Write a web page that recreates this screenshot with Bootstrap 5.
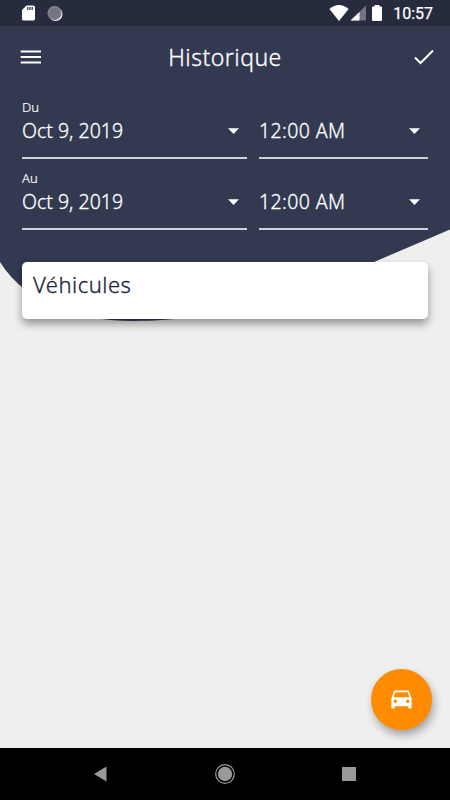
<!DOCTYPE html>
<html lang="fr">
<head>
<meta charset="utf-8">
<meta name="viewport" content="width=device-width, initial-scale=1">
<title>Historique</title>
<link href="https://cdn.jsdelivr.net/npm/bootstrap@5.3.0/dist/css/bootstrap.min.css" rel="stylesheet">
<style>
body{font-family:"Noto Sans",sans-serif;background:#efefef;height:800px;overflow:hidden}
svg{display:block;flex:none}
.backdrop{top:26px;left:0;z-index:0}
.status{height:26px;background:#262b3d;padding:0 17px 0 21px}
.clock{font:400 16px/26px Roboto,sans-serif;margin-left:8px;padding-top:2px;-webkit-text-stroke:.25px}
.appbar{height:62px;padding:0 16px 0 20px}
.title{font-size:23px;line-height:30px;padding-right:6px;margin-top:-1px!important;letter-spacing:.48px}
.fields{padding:12px 22px 0;display:grid;grid-template-columns:225px 169px;column-gap:12px}
.field{height:59px;margin-bottom:12.4px;border-bottom:2px solid #cfd1da}
.tag{font-size:13px;line-height:15px;height:15px;font-weight:300;-webkit-text-stroke:.2px}
.value{font-size:19.5px;line-height:32px;height:32px}
.date{letter-spacing:0}
.time{letter-spacing:.4px}
.panel{margin:19.2px 22px 0;height:57px;border-radius:5px;padding:7px 11px;font-size:22px;line-height:31px;letter-spacing:.5px;color:#20253a;box-shadow:0 5px 8px rgba(0,0,0,.38)}
.title,.value,.panel{font-weight:300;-webkit-text-stroke:.3px}
.fab{width:61px;height:61px;background:#ff8c00;margin:0 18px 18px;box-shadow:2px 5px 9px rgba(0,0,0,.33)}
.softkeys{height:52px;padding:0 94px}
</style>
<script src="https://cdn.jsdelivr.net/npm/bootstrap@5.3.0/dist/js/bootstrap.bundle.min.js"></script>
</head>
<body class="position-relative d-flex flex-column">
<svg class="backdrop position-absolute" width="450" height="300" viewBox="0 26 450 300"><path fill="#323950" d="M0 26H450V229.500L374 262L260 300C210 317 170 321 134 321C80 321 28 306 0 262Z"/></svg>

<div class="status position-relative d-flex align-items-center text-white">
  <svg width="15" height="18" viewBox="0 0 15 18"><path fill="#fff" d="M5.500 1.500H12.500Q14 1.500 14 3V15Q14 16.500 12.500 16.500H2.500Q1 16.500 1 15V6Z"/><path stroke="#262b3d" stroke-width="1.200" d="M6.800 3V6M9 3V6M11.200 3V6"/></svg>
  <svg class="ms-2" width="20" height="18" viewBox="0 0 20 18"><circle cx="11.500" cy="10" r="7" fill="#fff"/><circle cx="10.500" cy="9" r="7.200" fill="#727683"/><circle cx="10.500" cy="9" r="5.700" fill="none" stroke="#9599a4" stroke-dasharray="1 1"/></svg>
  <svg class="ms-auto" width="20" height="18" viewBox="0 0 20 18"><path fill="#fff" d="M.4 5Q10-3 19.600 5L10 17Z"/></svg>
  <svg width="18" height="18" viewBox="0 0 18 18"><path fill="#727683" d="M17 1.500V16.500H1.500Z"/><path fill="#fff" d="M10.500 8V16.500H1.500Z"/></svg>
  <svg width="18" height="18" viewBox="0 0 18 18"><path fill="#fff" d="M7.500 1H12.500V2.500H14Q15 2.500 15 3.500V16Q15 17 14 17H6Q5 17 5 16V3.500Q5 2.500 6 2.500H7.500Z"/></svg>
  <span class="clock">10:57</span>
</div>

<header class="appbar position-relative d-flex align-items-center justify-content-between text-white">
  <svg width="22" height="16" viewBox="0 0 22 16"><path stroke="#fff" stroke-width="2.200" d="M.7 2.500H21M.7 8H21M.7 13.500H21"/></svg>
  <h1 class="title m-0">Historique</h1>
  <svg width="20" height="16" viewBox="0 0 20 16"><path fill="none" stroke="#fff" stroke-width="2" d="M1 8.500L6.500 14L19 1.500"/></svg>
</header>

<main class="position-relative">
  <div class="fields text-white">
    <div class="field"><div class="tag">Du</div><div class="value d-flex align-items-center justify-content-between pe-2"><span class="date">Oct 9, 2019</span><svg width="11" height="6" viewBox="0 0 11 6"><path fill="#fff" d="M0 .2H11L5.500 6Z"/></svg></div></div>
    <div class="field"><div class="tag"></div><div class="value d-flex align-items-center justify-content-between pe-2"><span class="time">12:00 AM</span><svg width="11" height="6" viewBox="0 0 11 6"><path fill="#fff" d="M0 .2H11L5.500 6Z"/></svg></div></div>
    <div class="field"><div class="tag">Au</div><div class="value d-flex align-items-center justify-content-between pe-2"><span class="date">Oct 9, 2019</span><svg width="11" height="6" viewBox="0 0 11 6"><path fill="#fff" d="M0 .2H11L5.500 6Z"/></svg></div></div>
    <div class="field"><div class="tag"></div><div class="value d-flex align-items-center justify-content-between pe-2"><span class="time">12:00 AM</span><svg width="11" height="6" viewBox="0 0 11 6"><path fill="#fff" d="M0 .2H11L5.500 6Z"/></svg></div></div>
  </div>
  <div class="panel bg-white"><span>Véhicules</span></div>
</main>

<button class="fab btn rounded-circle border-0 p-0 mt-auto align-self-end d-flex align-items-center justify-content-center" aria-label="Véhicules">
  <svg width="27" height="27" viewBox="0 0 24 24"><path fill="#fff" d="M18.920 5.010C18.720 4.420 18.160 4 17.500 4h-11c-.66 0-1.210.42-1.420 1.010L3 11v8c0 .55.45 1 1 1h1c.55 0 1-.45 1-1v-1h12v1c0 .55.45 1 1 1h1c.55 0 1-.45 1-1v-8l-2.080-5.990zM6.500 15c-.83 0-1.500-.67-1.500-1.500S5.670 12 6.500 12s1.500.67 1.500 1.500S7.330 15 6.500 15zm11 0c-.83 0-1.500-.67-1.500-1.500s.67-1.500 1.500-1.500 1.500.67 1.500 1.500-.67 1.500-1.500 1.500zM5 10l1.500-4.500h11L19 10H5z"/></svg>
</button>
<nav class="softkeys bg-black d-flex align-items-center justify-content-between">
  <svg width="13" height="16" viewBox="0 0 13 16"><path fill="#999" d="M0 8L12.500.5V15.500Z"/></svg>
  <svg width="20" height="20" viewBox="0 0 20 20"><circle cx="10" cy="10" r="9.300" fill="none" stroke="#999" stroke-width="1.200"/><circle cx="10" cy="10" r="7.200" fill="#999"/></svg>
  <svg width="14" height="14" viewBox="0 0 14 14"><rect width="14" height="14" fill="#999"/></svg>
</nav>
</body>
</html>
